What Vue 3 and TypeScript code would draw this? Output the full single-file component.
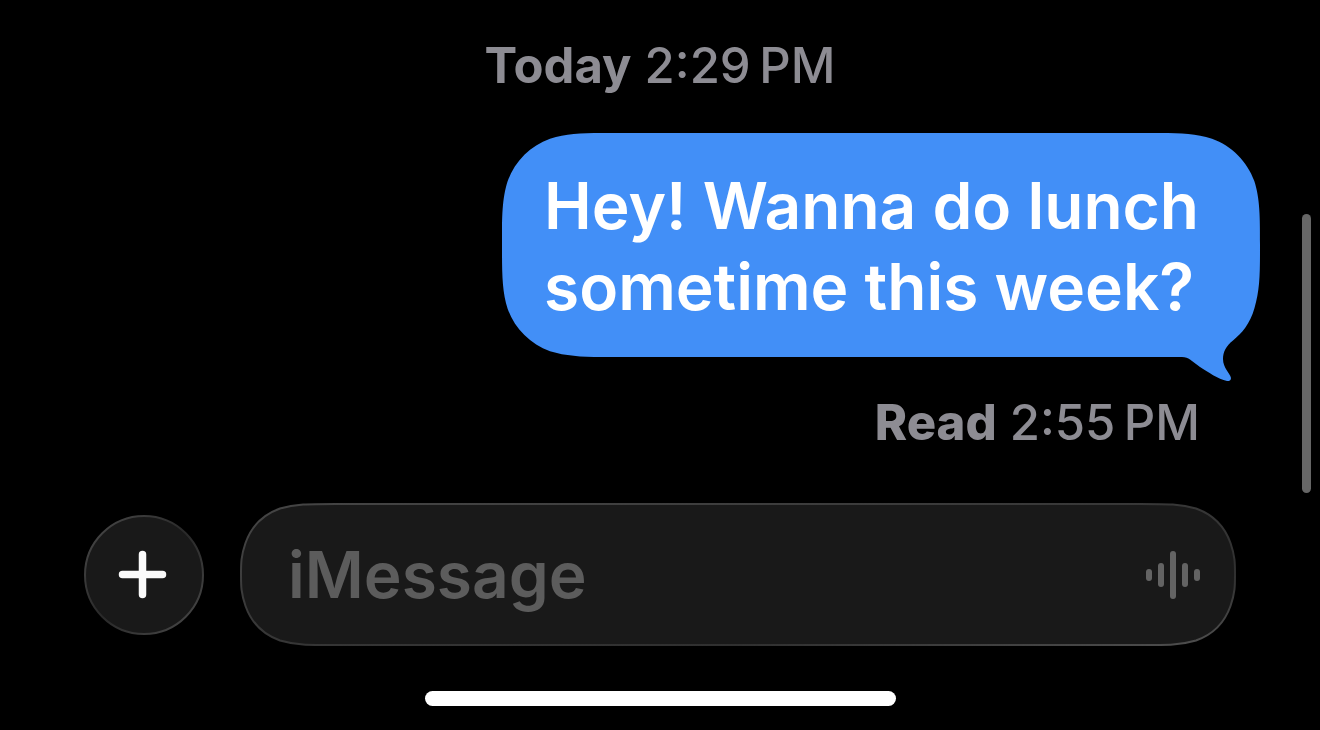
<script setup lang="ts">
import { ref } from 'vue'

interface Stamp {
  label: string
  time: string
}

const sent: Stamp = { label: 'Today', time: '2:29\u2009PM' }
const receipt: Stamp = { label: 'Read', time: '2:55\u2009PM' }
const message = 'Hey! Wanna do lunch sometime this week?'
const draft = ref('')

const bars = [
  { x: 1, h: 12 },
  { x: 13, h: 24 },
  { x: 25, h: 48 },
  { x: 37, h: 24 },
  { x: 49, h: 12 },
]
</script>

<template>
  <div class="screen">
    <main class="thread">
      <p class="stamp"><b>{{ sent.label }}</b> {{ sent.time }}</p>
      <div class="bubble">
        <svg class="bubble-shape" viewBox="0 0 758 248" preserveAspectRatio="none" aria-hidden="true">
          <path
            d="M100 0H658C680 0 694 1 710 5.700C729.700 12.800 745.200 28.300 752.300 48C758 66 758 83 758 112C758 141 758 156 752.500 175C748 191 740 200 731 207.500C724 213 721 219 721 226C721 235 728 240 729 245C729 247.500 727.500 248 725 248C716 246 706 239 698 234L688 226.500C686 225 683.500 224 680 224H100C78 224 64 223 48 218.300C28.300 211.200 12.800 195.700 5.700 176C0 158 0 141 0 112C0 83 0 66 5.700 48C12.800 28.300 28.300 12.800 48 5.700C64 1 78 0 100 0Z"
          />
        </svg>
        <p class="bubble-text">{{ message }}</p>
      </div>
      <p class="stamp receipt"><b>{{ receipt.label }}</b> {{ receipt.time }}</p>
    </main>

    <form class="composer" @submit.prevent>
      <button class="add" type="button" aria-label="Add attachment">
        <svg class="ring" viewBox="0 0 120 120" aria-hidden="true">
          <defs>
            <linearGradient id="ring-edge" x1="0" y1="0" x2="1" y2="1">
              <stop offset="0.1" stop-color="#444444" />
              <stop offset="0.5" stop-color="#292929" />
              <stop offset="0.9" stop-color="#444444" />
            </linearGradient>
          </defs>
          <circle cx="60" cy="60" r="59" fill="#191919" stroke="url(#ring-edge)" stroke-width="2" />
          <path d="M58.500 39.500V79.500M38.500 59.500H78.500" fill="none" stroke="#fafafa" stroke-width="7.500" stroke-linecap="round" />
        </svg>
      </button>
      <div class="field">
        <svg class="field-shape" viewBox="0 0 996 143" preserveAspectRatio="none" aria-hidden="true">
          <defs>
            <linearGradient id="field-edge" x1="0" y1="0" x2="1" y2="1">
              <stop offset="0" stop-color="#454545" />
              <stop offset="0.5" stop-color="#363636" />
              <stop offset="0.75" stop-color="#303030" />
              <stop offset="1" stop-color="#505050" />
            </linearGradient>
          </defs>
          <path
            d="M96 1H900C928 1 941 1 956 5.500C973 11.500 984.500 23 990.500 40C995 53 995 60 995 71.500C995 83 995 90 990.500 103C984.500 120 973 131.500 956 137.500C941 142 928 142 900 142H96C68 142 55 142 40 137.500C23 131.500 11.500 120 5.500 103C1 90 1 83 1 71.500C1 60 1 53 5.500 40C11.500 23 23 11.500 40 5.500C55 1 68 1 96 1Z"
            fill="#191919"
            stroke="url(#field-edge)"
            stroke-width="2"
          />
        </svg>
        <input v-model="draft" class="entry" type="text" placeholder="iMessage" aria-label="iMessage" />
        <button class="audio" type="button" aria-label="Record audio">
          <svg width="56" height="48" viewBox="0 0 56 48" aria-hidden="true">
            <rect v-for="bar in bars" :key="bar.x" :x="bar.x" :y="24 - bar.h / 2" width="6" :height="bar.h" rx="3" fill="#636363" />
          </svg>
        </button>
      </div>
    </form>

    <div class="home-indicator"></div>
    <div class="scroll-thumb"></div>
  </div>
</template>

<style>
body {
  margin: 0;
  background: #000000;
}
</style>

<style scoped>
.screen {
  position: relative;
  box-sizing: border-box;
  min-height: 100vh;
  padding: 36px 0 24px;
  display: flex;
  flex-direction: column;
  background: #000000;
  font-family: Inter, "Liberation Sans", sans-serif;
}

.thread {
  display: flex;
  flex-direction: column;
  padding: 0 60px;
}

.stamp {
  margin: 0;
  align-self: center;
  color: #8d8c93;
  font-size: 49px;
  line-height: 60px;
  font-weight: 500;
}

.stamp b {
  font-weight: 700;
}

.bubble {
  position: relative;
  align-self: flex-end;
  box-sizing: border-box;
  max-width: 758px;
  margin-top: 37px;
  padding: 32px 43px 30px 42px;
}

.bubble-shape {
  position: absolute;
  top: 0;
  left: 0;
  width: 100%;
  height: calc(100% + 24px);
  fill: #428ff7;
}

.bubble-text {
  position: relative;
  margin: 0;
  color: #ffffff;
  font-size: 64px;
  line-height: 81px;
  font-weight: 600;
}

.receipt {
  align-self: flex-end;
  margin: 36px 60px 0 0;
}

.receipt b {
  font-weight: 800;
}

.composer {
  display: flex;
  align-items: center;
  gap: 36px;
  margin: 50px 84px 0;
}

.add {
  flex: none;
  width: 120px;
  height: 120px;
  padding: 0;
  border: 0;
  border-radius: 50%;
  background: transparent;
}

.ring {
  display: block;
  width: 100%;
  height: 100%;
}

.field {
  position: relative;
  flex: 1;
  display: flex;
  align-items: center;
  min-width: 0;
  padding: 31px 35px 31px 48px;
}

.field-shape {
  position: absolute;
  top: 0;
  left: 0;
  width: 100%;
  height: 100%;
}

.entry {
  position: relative;
  flex: 1;
  min-width: 0;
  height: 81px;
  padding: 0;
  border: 0;
  outline: 0;
  background: transparent;
  color: #ffffff;
  font-family: inherit;
  font-size: 64px;
  font-weight: 600;
}

.entry::placeholder {
  color: #5c5c5c;
  opacity: 1;
}

.audio {
  position: relative;
  flex: none;
  padding: 0;
  border: 0;
  background: transparent;
}

.audio svg {
  display: block;
}

.home-indicator {
  align-self: center;
  width: 471px;
  height: 15px;
  margin-top: 45px;
  border-radius: 8px;
  background: #ffffff;
}

.scroll-thumb {
  position: absolute;
  top: 214px;
  right: 9px;
  width: 9px;
  height: 279px;
  border-radius: 5px;
  background: #666666;
}
</style>
